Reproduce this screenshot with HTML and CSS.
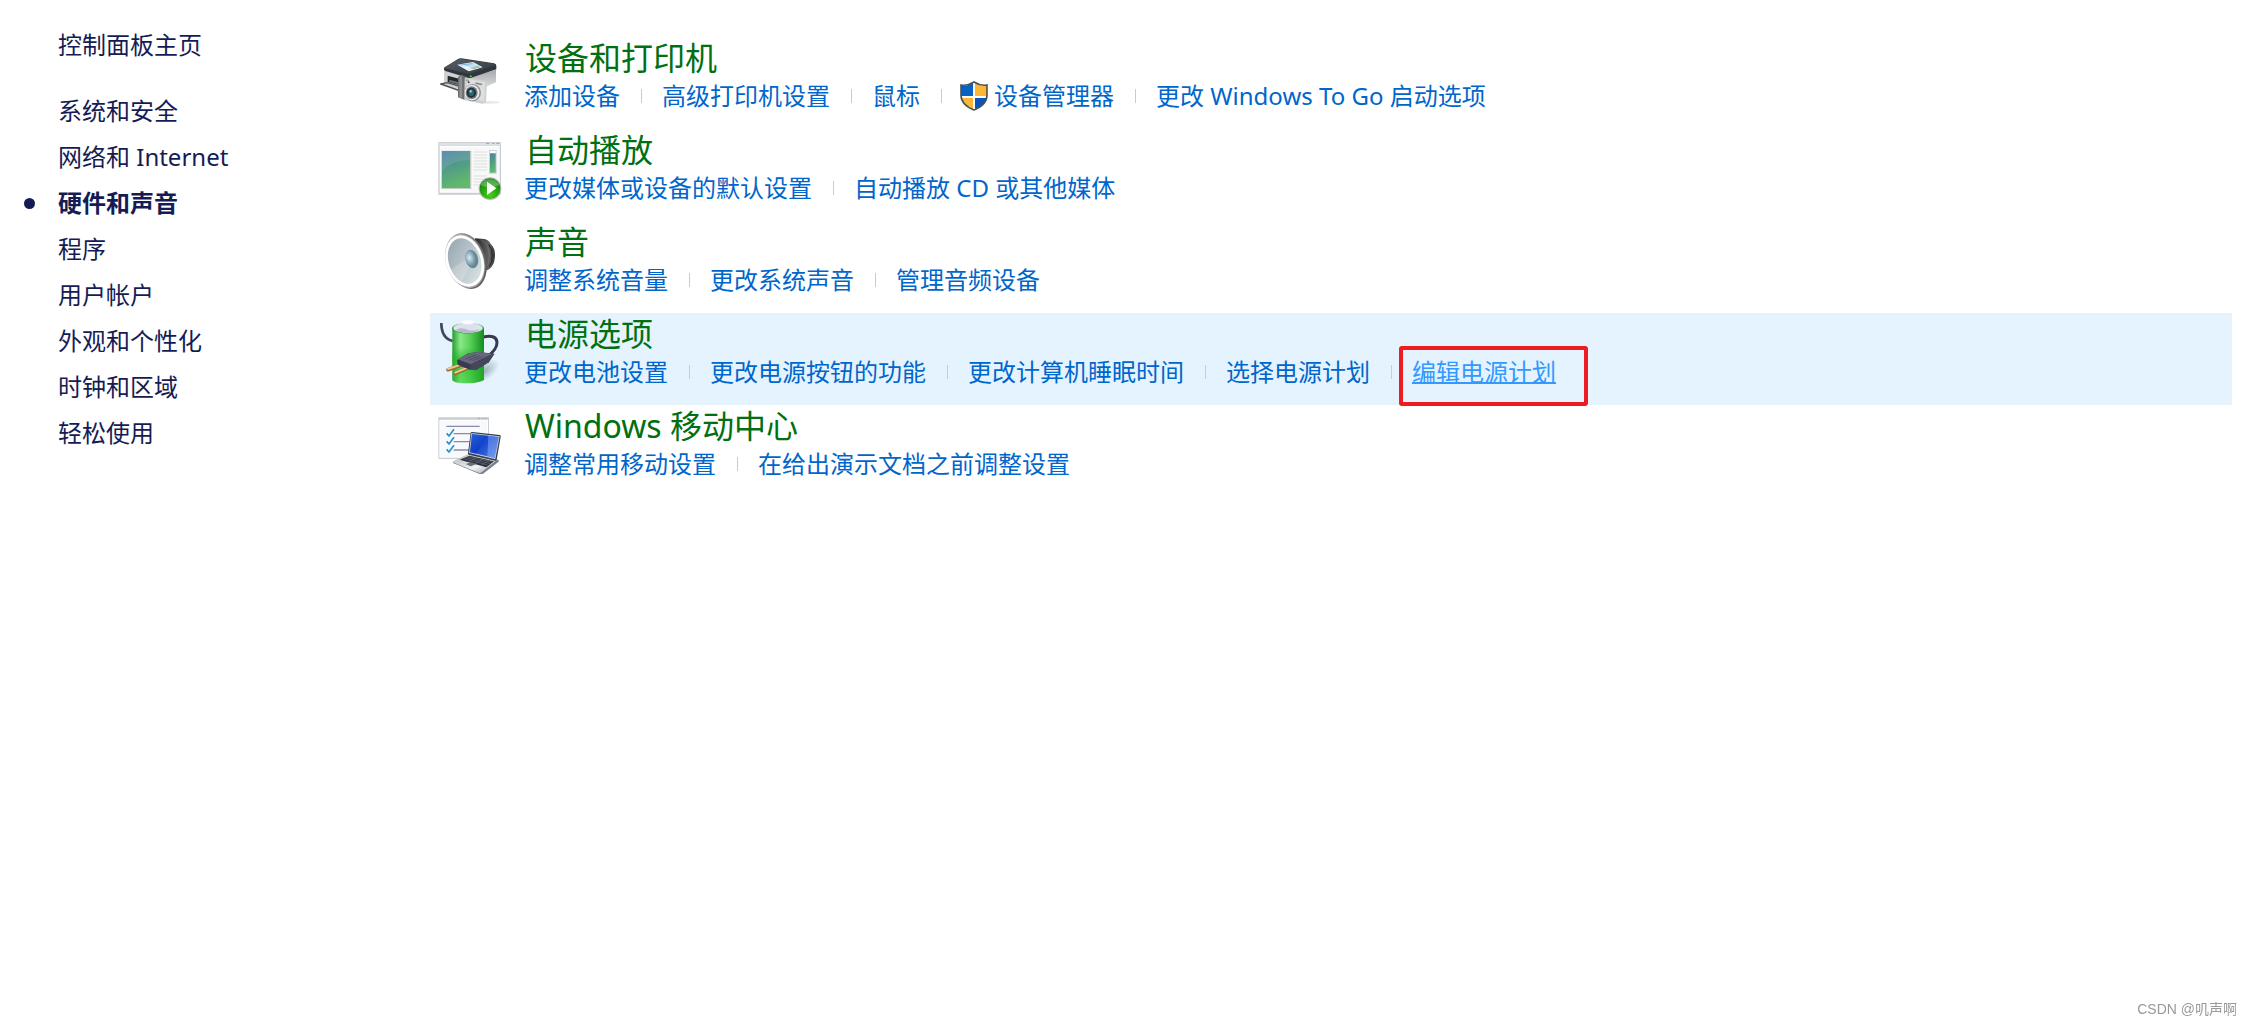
FILE: index.html
```
<!DOCTYPE html>
<html lang="zh-CN">

<head>
    <meta charset="UTF-8">
    <meta name="viewport" content="width=device-width, initial-scale=1.0">
    <title>硬件和声音</title>
    <link rel="stylesheet" href="styles.css">
</head>

<body>
    <div class="container">
        <nav class="sidebar">
            <a class="home" href="#">控制面板主页</a>
            <a href="#">系统和安全</a>
            <a href="#">网络和 Internet</a>
            <a class="current" href="#">硬件和声音</a>
            <a href="#">程序</a>
            <a href="#">用户帐户</a>
            <a href="#">外观和个性化</a>
            <a href="#">时钟和区域</a>
            <a href="#">轻松使用</a>
        </nav>

        <main class="content">
            <section class="category">
                <!-- printer and camera -->
                <svg class="icon" viewBox="54 42 192 192">
                    <defs>
                        <linearGradient id="printerTop" x1="0" y1="0" x2="1" y2="1">
                            <stop offset="0" stop-color="#596168"/>
                            <stop offset="1" stop-color="#30383d"/>
                        </linearGradient>
                        <linearGradient id="printerSide" x1="0" y1="0" x2="0" y2="1">
                            <stop offset="0" stop-color="#a5a7aa"/>
                            <stop offset="1" stop-color="#e3e4e6"/>
                        </linearGradient>
                        <linearGradient id="photo" x1="0" y1="0" x2="1" y2="1">
                            <stop offset="0" stop-color="#2b7fd0"/>
                            <stop offset=".5" stop-color="#cfe8fa"/>
                            <stop offset="1" stop-color="#4b8d4c"/>
                        </linearGradient>
                    </defs>
                    <ellipse cx="207" cy="217" rx="33" ry="4" fill="#e7e7e7"/>
                    <path d="M72 118l80 23v44l-80-19z" fill="#d0d1d3"/>
                    <path d="M150 142l78-23v38l-40 18-38 6z" fill="url(#printerSide)"/>
                    <path d="M83 137l34 9v19l-34-9z" fill="#22272b"/>
                    <path d="M88 149l29 8v7l-29-8z" fill="#6a6f73"/>
                    <path d="M72 113l42-26q4-3 10-2l98 15q8 2 7 8v10l-75 25q-5 2-11 0l-67-20q-5-2-4-10z" fill="#30373c"/>
                    <path d="M74 112l42-24q3-2 8-1l98 14q5 2 2 5l-73 25q-4 2-9 0l-67-16q-3-1-1-3z" fill="url(#printerTop)"/>
                    <path d="M112 104l47-8 29 16-42 12z" fill="#eef6fa"/>
                    <path d="M118 104l40-6 24 14-35 9z" fill="url(#photo)"/>
                    <path d="M120 105q14-4 28 7t31 1l-32 9z" fill="#fff" opacity=".65"/>
                    <path d="M82 158l-20 4 60 21v-5M82 158l35 10" fill="none" stroke="#4c5256" stroke-width="4" stroke-linejoin="round"/>
                    <path d="M114 141l11-7 14 6 4 66-10 3-19-7z" fill="#6b6e71"/>
                    <path d="M118 141l8-4 1 67-9-3z" fill="#8d9194"/>
                    <path d="M139 143l58 10q4 1 4 5l-3 60-12 3-49-10q-4-1-4-5l1-60q1-4 5-3z" fill="#cfd0d2"/>
                    <path d="M141 146l54 10-2 58-53-11z" fill="#dddedf"/>
                    <path d="M167 157l20 4-1 5-20-4z" fill="#8e8c79"/>
                    <path d="M137 147l10 2v6l-10-2z" fill="#a3a4a6"/>
                    <circle cx="146" cy="157" r="3" fill="#454545"/>
                    <path d="M148 140l4-6 5 8z" fill="#35db3c"/>
                    <ellipse cx="158" cy="188" rx="25" ry="26" fill="#929497"/>
                    <ellipse cx="156" cy="188" rx="22" ry="23" fill="#f2f2f2"/>
                    <ellipse cx="155" cy="188" rx="18" ry="19" fill="#777b7f"/>
                    <ellipse cx="154" cy="188" rx="14" ry="15" fill="#253039"/>
                    <ellipse cx="154" cy="188" rx="8" ry="10" fill="#2b6473"/>
                    <ellipse cx="152" cy="184" rx="3" ry="4" fill="#9bdce2"/>
                </svg>
                <div class="details">
                    <h2><a href="#">设备和打印机</a></h2>
                    <ul>
                        <li><a href="#">添加设备</a></li>
                        <li><a href="#">高级打印机设置</a></li>
                        <li><a href="#">鼠标</a></li>
                        <li class="admin">
                            <svg class="shield" viewBox="0 0 28 30">
                                <path d="M14 1q-6 4-13 3v10q0 10 13 15 13-5 13-15V4Q20 5 14 1z" fill="#fff"/>
                                <path d="M13 2Q8 5 1 5v10h12z" fill="#0563c1"/>
                                <path d="M15 2q5 3 12 3v10H15z" fill="#fdb734"/>
                                <path d="M1 17h12v11Q2 24 1 17z" fill="#fdb734"/>
                                <path d="M15 17h12q-1 7-12 11z" fill="#0754ba"/>
                                <path d="M14 1q-6 4-13 3v10q0 10 13 15 13-5 13-15V4Q20 5 14 1z" fill="none" stroke="#4c5052" stroke-width="1.6"/>
                            </svg>
                            <a href="#">设备管理器</a>
                        </li>
                        <li><a href="#">更改 Windows To Go 启动选项</a></li>
                    </ul>
                </div>
            </section>

            <section class="category">
                <!-- window with play badge -->
                <svg class="icon" viewBox="54 33 192 192">
                    <defs>
                        <linearGradient id="pane" x1="0" y1="0" x2=".3" y2="1">
                            <stop offset="0" stop-color="#4b7fa8"/>
                            <stop offset=".5" stop-color="#509c88"/>
                            <stop offset="1" stop-color="#61b96b"/>
                        </linearGradient>
                        <radialGradient id="play" cx=".5" cy=".8" r=".8">
                            <stop offset="0" stop-color="#46d116"/>
                            <stop offset="1" stop-color="#087c0b"/>
                        </radialGradient>
                    </defs>
                    <path d="M55 51h188v158H55z" fill="#c8cdd2"/>
                    <path d="M57 53h184v9H57z" fill="#dce1e6"/>
                    <path d="M198 55h10m8 0h7m6 0h9" stroke="#99a3b0" stroke-width="3"/>
                    <path d="M59 63h180v140H59z" fill="#fff"/>
                    <path d="M61 66h176v134H61z" fill="#f7f8f8"/>
                    <path d="M64 77h90v115H64z" fill="#c2c9c6"/>
                    <path d="M66 78h84v111H66z" fill="url(#pane)"/>
                    <path d="M66 78h84v28q-49-3-84 31z" fill="#fff" opacity=".1"/>
                    <path d="M161 81h40m-40 9h40m-40 9h40m-40 9h40m-40 9h40m-40 9h40m-40 9h40m-40 18h40m-40 9h34m-34 9h25m-25 9h20" stroke="#dedfdf" stroke-width="3"/>
                    <path d="M207 75h23v71h-23z" fill="#cbd1d6"/>
                    <path d="M210 78h17v7h-17z" fill="#fff"/>
                    <path d="M210 85h17v58h-17z" fill="url(#pane)"/>
                    <circle cx="210" cy="191" r="34" fill="#b6bbb5"/>
                    <circle cx="210" cy="191" r="31" fill="url(#play)"/>
                    <path d="M182 181q7-19 28-19t28 19q-28 12-56 0z" fill="#fff" opacity=".27"/>
                    <path d="M201 170l28 20-28 20z" fill="#fff"/>
                </svg>
                <div class="details">
                    <h2><a href="#">自动播放</a></h2>
                    <ul>
                        <li><a href="#">更改媒体或设备的默认设置</a></li>
                        <li><a href="#">自动播放 CD 或其他媒体</a></li>
                    </ul>
                </div>
            </section>

            <section class="category">
                <!-- speaker -->
                <svg class="icon" viewBox="54 39 192 192">
                    <defs>
                        <linearGradient id="magnet" x1="0" y1="0" x2="1" y2="0">
                            <stop offset="0" stop-color="#252525"/>
                            <stop offset=".7" stop-color="#636363"/>
                            <stop offset="1" stop-color="#333"/>
                        </linearGradient>
                        <linearGradient id="rim" x1="0" y1="0" x2="1" y2="1">
                            <stop offset="0" stop-color="#ccc"/>
                            <stop offset=".5" stop-color="#777"/>
                            <stop offset="1" stop-color="#555"/>
                        </linearGradient>
                        <linearGradient id="cone" x1="0" y1="0" x2=".7" y2="1">
                            <stop offset="0" stop-color="#92a1aa"/>
                            <stop offset=".5" stop-color="#b3c0c7"/>
                            <stop offset="1" stop-color="#d7e1e4"/>
                        </linearGradient>
                        <radialGradient id="cap" cx=".35" cy=".4">
                            <stop offset="0" stop-color="#d8edf5"/>
                            <stop offset=".6" stop-color="#8dadba"/>
                            <stop offset="1" stop-color="#688592"/>
                        </radialGradient>
                    </defs>
                    <path d="M165 70l29 2q13 3 18 15 13 12 13 32 0 23-10 36-9 12-24 12l-21 9z" fill="url(#magnet)"/>
                    <path d="M184 75q24 13 24 48 0 28-20 43" fill="none" stroke="#777" stroke-width="2"/>
                    <path d="M206 88q12 15 11 35 0 18-9 32" fill="none" stroke="#272727" stroke-width="3"/>
                    <ellipse cx="139" cy="138" rx="58" ry="86" transform="rotate(-18 139 138)" fill="url(#rim)"/>
                    <ellipse cx="135" cy="138" rx="57" ry="83" transform="rotate(-18 135 138)" fill="#aaa"/>
                    <ellipse cx="134" cy="138" rx="56" ry="79" transform="rotate(-18 134 138)" fill="#fff"/>
                    <ellipse cx="134" cy="138" rx="48" ry="70" transform="rotate(-18 134 138)" fill="url(#cone)"/>
                    <path d="M91 164l47-31 10 23-22 43q-24-11-35-35z" fill="#fff" opacity=".2"/>
                    <ellipse cx="155" cy="132" rx="19" ry="28" transform="rotate(-15 155 132)" fill="url(#cap)"/>
                </svg>
                <div class="details">
                    <h2><a href="#">声音</a></h2>
                    <ul>
                        <li><a href="#">调整系统音量</a></li>
                        <li><a href="#">更改系统声音</a></li>
                        <li><a href="#">管理音频设备</a></li>
                    </ul>
                </div>
            </section>

            <section class="category active">
                <!-- battery and plug -->
                <svg class="icon" viewBox="54 45 192 192">
                    <defs>
                        <linearGradient id="battery" x1="0" y1="0" x2="1" y2="0">
                            <stop offset="0" stop-color="#279c31"/>
                            <stop offset=".25" stop-color="#88e887"/>
                            <stop offset=".55" stop-color="#5ad25a"/>
                            <stop offset="1" stop-color="#138b20"/>
                        </linearGradient>
                        <linearGradient id="batteryLow" x1="0" y1="0" x2="0" y2="1">
                            <stop offset=".35" stop-color="#16a91d" stop-opacity="0"/>
                            <stop offset=".55" stop-color="#13b81a" stop-opacity=".6"/>
                            <stop offset="1" stop-color="#36c52f" stop-opacity=".4"/>
                        </linearGradient>
                        <radialGradient id="shade">
                            <stop offset="0" stop-color="#718391" stop-opacity=".6"/>
                            <stop offset="1" stop-color="#718391" stop-opacity="0"/>
                        </radialGradient>
                    </defs>
                    <ellipse cx="194" cy="198" rx="50" ry="27" transform="rotate(-35 194 198)" fill="url(#shade)"/>
                    <path d="M64 54q0 46 34 54" fill="none" stroke="#42445b" stroke-width="8"/>
                    <path d="M190 96q40-8 41 16 1 20-30 44" fill="none" stroke="#373950" stroke-width="9"/>
                    <path d="M97 69v155q0 7 25 10 32 3 57-4 13-3 13-7V69z" fill="url(#battery)"/>
                    <path d="M97 69v155q0 7 25 10 32 3 57-4 13-3 13-7V69z" fill="url(#batteryLow)"/>
                    <ellipse cx="144" cy="70" rx="48" ry="16" fill="#36a442"/>
                    <ellipse cx="144" cy="69" rx="44" ry="15" fill="#dfe1ee"/>
                    <path d="M108 74q18-8 34 0 18 6 38-2-9 11-36 11-28 0-36-9z" fill="#b3b8cd"/>
                    <path d="M124 52v17q20 8 40 0V52z" fill="#dde0ec"/>
                    <ellipse cx="144" cy="52" rx="20" ry="6" fill="#fafbff"/>
                    <path d="M84 194l39-14M106 205l40-17" stroke="#986735" stroke-width="11" stroke-linecap="round"/>
                    <path d="M84 192l38-13M106 203l38-16" stroke="#f2c88d" stroke-width="6" stroke-linecap="round"/>
                    <path d="M112 164l33-19 31-4 48 5-17 26-39 24-17-2-39-17z" fill="#45465b"/>
                    <path d="M114 163l33-18 30-4 40 6-29 13-37 18z" fill="#67687e"/>
                    <path d="M112 164l39 13v17l-37-14z" fill="#383a4d"/>
                    <path d="M137 162l31-13M148 165l31-13M159 167l29-12" stroke="#4d4e62" stroke-width="3"/>
                </svg>
                <div class="details">
                    <h2><a href="#">电源选项</a></h2>
                    <ul>
                        <li><a href="#">更改电池设置</a></li>
                        <li><a href="#">更改电源按钮的功能</a></li>
                        <li><a href="#">更改计算机睡眠时间</a></li>
                        <li><a href="#">选择电源计划</a></li>
                        <li><a class="marked" href="#">编辑电源计划</a></li>
                    </ul>
                </div>
            </section>

            <section class="category">
                <!-- checklist and laptop -->
                <svg class="icon" viewBox="54 36 192 192">
                    <defs>
                        <linearGradient id="screen" x1="0" y1="0" x2="1" y2="1">
                            <stop offset="0" stop-color="#367ce9"/>
                            <stop offset=".45" stop-color="#1748cf"/>
                            <stop offset="1" stop-color="#4d80e9"/>
                        </linearGradient>
                        <linearGradient id="laptopBase" x1="0" y1="0" x2="1" y2="1">
                            <stop offset="0" stop-color="#aeb4bb"/>
                            <stop offset=".6" stop-color="#eef0f3"/>
                            <stop offset="1" stop-color="#8f99a5"/>
                        </linearGradient>
                    </defs>
                    <path d="M55 52h152v125H55z" fill="#c9cdd1"/>
                    <path d="M58 59h146v114H58z" fill="#fff"/>
                    <path d="M61 62h140v108H61z" fill="#f8f9fb"/>
                    <path d="M174 55h6m6 0h4m5 0h5" stroke="#929aa4" stroke-width="2"/>
                    <path d="M79 79h100M101 101h63M101 125h52M101 150h48" stroke="#8a89ad" stroke-width="4"/>
                    <path d="M80 100l7 8 15-20M80 124l7 8 15-20M80 148l7 8 15-20" fill="none" stroke="#288fc9" stroke-width="5"/>
                    <path d="M100 185l46-22 88 16q5 3 1 7l-46 35q-5 2-12 0l-76-31q-4-2-1-5z" fill="#77808b"/>
                    <path d="M100 184l47-23 86 17-48 39q-4 3-9 1l-75-30z" fill="url(#laptopBase)"/>
                    <path d="M119 179l29-12 74 17-23 18z" fill="#282d38"/>
                    <path d="M130 176l73 19M138 173l73 18M145 170l72 16M146 185l25-13M166 191l23-14M184 196l23-15" stroke="#68707b" stroke-width="2"/>
                    <path d="M137 192l17-5 15 5-17 7z" fill="#686d76"/>
                    <path d="M152 98q1-3 5-2l82 9q4 1 3 5l-12 69q-1 4-5 3l-78-18q-4-1-3-5z" fill="#343c4c"/>
                    <path d="M154 99l85 10-13 69-79-19z" fill="#c5cfdb"/>
                    <path d="M156 102l80 9-12 63-74-17z" fill="url(#screen)"/>
                    <path d="M205 107l31 4-12 63-22-5z" fill="#bbd1ff" opacity=".35"/>
                    <path d="M156 102l49 5-38 54-17-4z" fill="#062db6" opacity=".35"/>
                </svg>
                <div class="details">
                    <h2><a href="#">Windows 移动中心</a></h2>
                    <ul>
                        <li><a href="#">调整常用移动设置</a></li>
                        <li><a href="#">在给出演示文档之前调整设置</a></li>
                    </ul>
                </div>
            </section>
        </main>
    </div>

    <div class="watermark">CSDN @叽声啊</div>
</body>

</html>
```

FILE: styles.css
```
body {
    margin: 0;
    font-family: "Noto Sans", "Noto Sans CJK SC", sans-serif;
    font-size: 24px;
    background-color: #ffffff;
}

a {
    color: #0066cc;
    text-decoration: none;
}

a:hover {
    color: #3399ff;
    text-decoration: underline;
}

.container {
    display: flex;
    padding-right: 20px;
}

/* left navigation */
.sidebar {
    display: flex;
    flex-direction: column;
    flex: 0 0 372px;
    padding: 22px 0 0 58px;
    line-height: 46px;
}

.sidebar a {
    position: relative;
    color: #151c55;
}

.sidebar .home {
    margin-bottom: 20px;
}

.sidebar .current {
    font-weight: bold;
}

.sidebar .current::before {
    content: "";
    position: absolute;
    left: -34px;
    top: 18px;
    width: 11px;
    height: 11px;
    border-radius: 50%;
    background-color: #151c55;
}

/* categories */
.content {
    flex: 1;
    padding-top: 37px;
}

.category {
    display: flex;
    gap: 22px;
    padding: 0 8px 16px;
}

.category.active {
    background-color: #e5f3ff;
}

.icon {
    flex: none;
    width: 64px;
    height: 64px;
    margin-top: 7px;
}

h2 {
    margin: 0 0 0 1px;
    font-size: 32px;
    font-weight: normal;
    line-height: 42px;
}

h2 a {
    color: #007010;
}

ul {
    display: flex;
    margin: 0;
    padding: 0;
    list-style: none;
    line-height: 34px;
}

li {
    display: flex;
    align-items: center;
}

li + li::before {
    content: "";
    width: 1px;
    height: 14px;
    margin: 0 20px 0 21px;
    background-color: #cccccc;
}

li.admin::before {
    margin-right: 18px;
}

.shield {
    width: 28px;
    height: 30px;
    margin-right: 6px;
}

.marked {
    position: relative;
    color: #3399ff;
    text-decoration: underline;
    text-decoration-thickness: 2px;
}

.marked::after {
    content: "";
    position: absolute;
    top: -9px;
    left: -13px;
    right: -32px;
    height: 52px;
    border: 4px solid #ed1c24;
    border-radius: 3px;
}

.watermark {
    position: fixed;
    right: 15px;
    bottom: 6px;
    color: #999999;
    font-family: "Liberation Sans", "Noto Sans CJK SC", sans-serif;
    font-size: 14px;
    line-height: 20px;
}
```
